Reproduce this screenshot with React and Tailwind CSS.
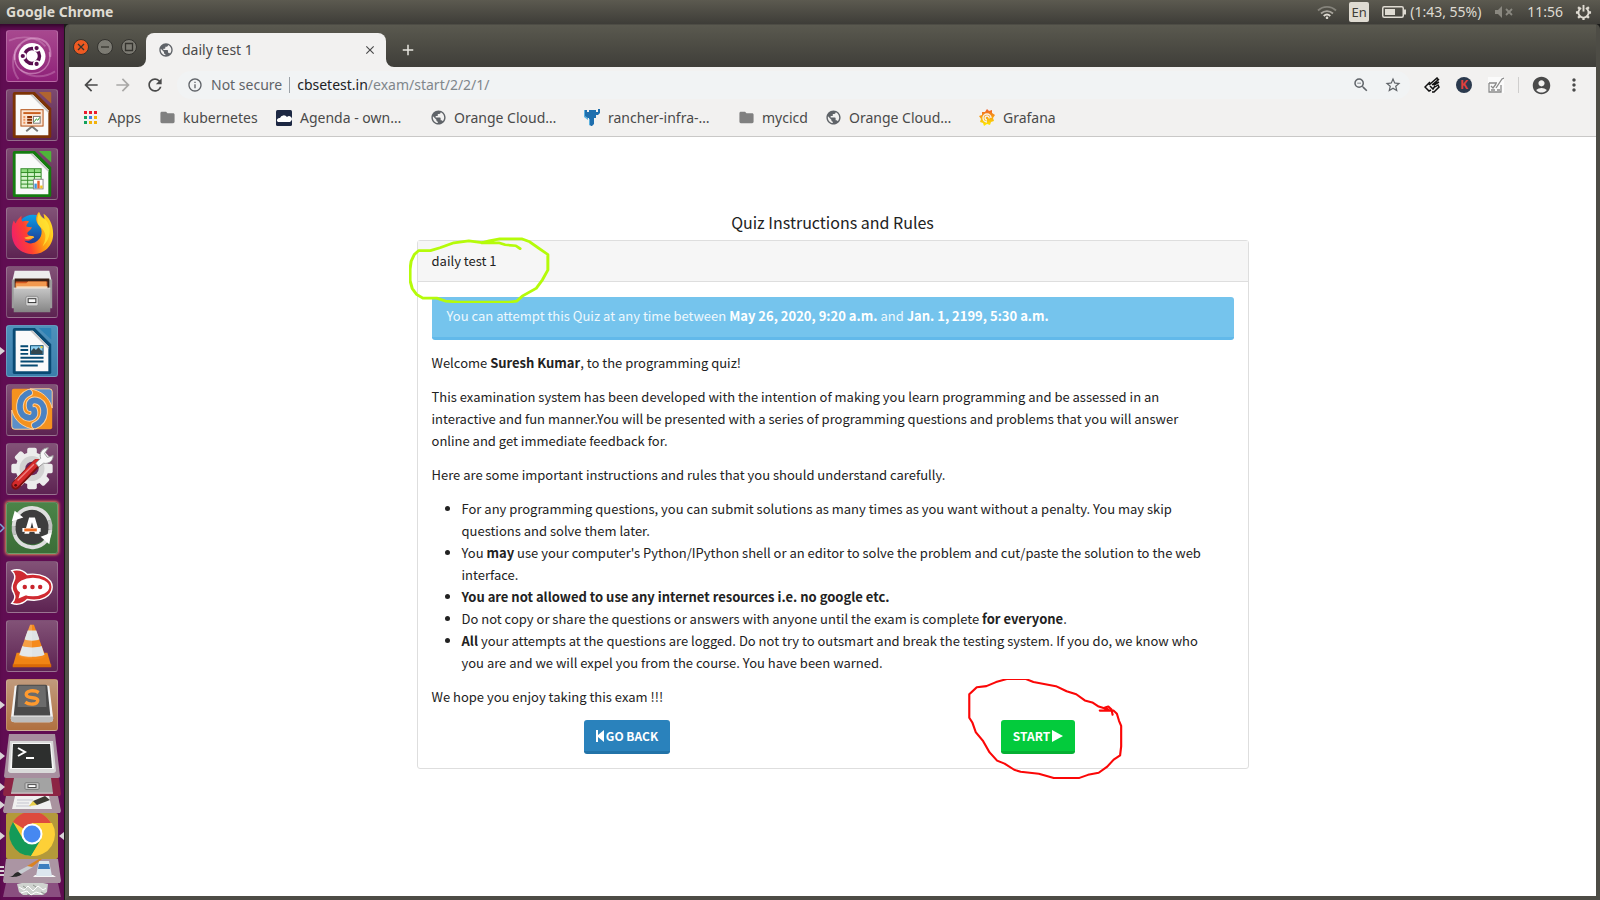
import React from "react";
import {
  MdPublic, MdFolder, MdArrowBack, MdArrowForward, MdRefresh, MdInfoOutline,
  MdStarBorder, MdMoreVert, MdAccountCircle, MdOutlineZoomOut, MdClose, MdAdd,
} from "react-icons/md";

/* ---------- Launcher drawings (52 x 52 grid) ---------- */

function UbuntuIcon() {
  return (
    <svg viewBox="0 0 52 52" className="size-full">
      <g fill="none" stroke="#e9b6dc" strokeOpacity=".5">
        <path d="M8 30C6 14 22 4 36 9c7 3 10 9 9 18" strokeWidth="2" />
        <path d="M44 22c3 14-8 24-22 22C12 42 7 34 8 24" strokeWidth="1.5" />
        <path d="M2 10C16 4 32 6 40 16M50 42C38 50 22 48 14 40M12 50C4 40 4 24 14 14" strokeWidth="2" strokeOpacity=".3" />
      </g>
      <circle cx="26" cy="26.500" r="14" fill="#fff" />
      <circle cx="26" cy="26" r="7.800" fill="none" stroke="#5a0f50" strokeWidth="3.600" />
      <g stroke="#fff" strokeWidth="1.600" fill="#5a0f50">
        <circle cx="16.400" cy="26" r="3" />
        <circle cx="30.800" cy="17.700" r="3" />
        <circle cx="30.800" cy="34.300" r="3" />
      </g>
    </svg>
  );
}

function OfficeSheet({ edge, light, page = "#fafafa", children }) {
  return (
    <svg viewBox="0 0 52 52" className="size-full">
      <path d="M8 2h21l17 17v29a2 2 0 0 1-2 2H8a2 2 0 0 1-2-2V4a2 2 0 0 1 2-2z" fill={edge} />
      <path d="M33 2h12a1 1 0 0 1 1 1v11z" fill={light} />
      <path d="M9 5h18l16 16v26H9z" fill={page} />
      <path d="M27 5l16 16v3L24 5z" fill="#c9c9c9" />
      {children}
    </svg>
  );
}

function ImpressIcon() {
  return (
    <OfficeSheet edge="#7d3306" light="#b06430">
      <path d="M26 39v-3M26 38l-6 5M26 38l6 5" stroke="#777" strokeWidth="2" />
      <rect x="14.500" y="20.500" width="23" height="17" fill="#fbe3d2" stroke="#b04a0e" />
      <rect x="17" y="23" width="18" height="2" fill="#c9601f" />
      <path d="M17 28h2M17 31h2M17 34h2" stroke="#f0935a" strokeWidth="2" />
      <path d="M21 28h5M21 31h5M21 34h5" stroke="#8a3004" strokeWidth="2" />
      <rect x="27.500" y="27.500" width="7" height="7" fill="#fff" stroke="#777" />
      <path d="M28.500 33l2-3 1.500 1.500 2-3" fill="none" stroke="#2b9c2b" />
    </OfficeSheet>
  );
}

function CalcIcon() {
  return (
    <OfficeSheet edge="#157c10" light="#4fb53a">
      <rect x="14" y="20" width="22" height="21" fill="#2f8a24" />
      {[21, 25, 29, 33, 37].map((y) => (
        <g key={y} fill={y === 21 ? "#8fdc7f" : "#d2f4c8"}>
          <rect x="15" y={y} width="6" height="3" />
          <rect x="22" y={y} width="6" height="3" />
          <rect x="29" y={y} width="6" height="3" />
        </g>
      ))}
      <rect x="27.500" y="31.500" width="10" height="10" fill="#fff" stroke="#888" />
      <rect x="28.500" y="36" width="2.500" height="5" fill="#3f96dc" />
      <rect x="31.500" y="33" width="2.500" height="8" fill="#e8622a" />
      <rect x="34.500" y="38" width="2.500" height="3" fill="#f2c320" />
    </OfficeSheet>
  );
}

function WriterIcon() {
  return (
    <OfficeSheet edge="#094a73" light="#2d81b4">
      <path d="M14 21h8M14 25h8M14 29h8M14 33h24M14 37h24M14 41h18" stroke="#064a72" strokeWidth="2" />
      <rect x="24.500" y="20.500" width="13" height="9" fill="#8fd0f0" stroke="#064a72" />
      <path d="M25 29v-3l3-3 2 2 3-3 2 3 2 1v3z" fill="#33464d" />
      <rect x="35" y="21" width="2" height="2" fill="#f1cf2b" />
    </OfficeSheet>
  );
}

function FirefoxIcon() {
  return (
    <svg viewBox="0 0 52 52" className="size-full">
      <defs>
        <linearGradient id="fxBody" x1="0" y1=".6" x2="1" y2=".3">
          <stop offset="0" stopColor="#f0206a" />
          <stop offset=".35" stopColor="#ff4030" />
          <stop offset=".65" stopColor="#ff9a12" />
          <stop offset="1" stopColor="#ffe226" />
        </linearGradient>
        <linearGradient id="fxGlobe" x1="0" y1="0" x2="0" y2="1">
          <stop offset="0" stopColor="#0aa0e8" />
          <stop offset="1" stopColor="#232a86" />
        </linearGradient>
      </defs>
      <circle cx="27" cy="24" r="17" fill="url(#fxGlobe)" />
      <path d="M7 13c1 1 1 2 2 3 2-4 3-5 6-8 0 3 0 5 1 6 3-1 5-1 7 0-2 2-3 4-3 5 1 1 4 1 6 1-1 3-4 4-5 6 0 2 2 3 5 3 1 0 1 2 0 3-3 3-6 2-8 2 2 2 6 4 11 2 8-4 9-14 4-18-3-4-4-8 0-14 0 4 3 6 6 8 0-2-1-5-1-6 5 3 10 10 10 21 0 12-9 21-21 21-13 0-22-9-22-22 0-5 0-9 2-13z" fill="url(#fxBody)" />
      <path d="M34 4c0 4 3 6 6 8 6 6 7 19-3 28 8-16-2-18-5-24-1-4 0-8 2-12z" fill="#ffe836" fillOpacity=".75" />
      <path d="M18 31c3 3 7 1 10 0 1-2-2-2-4-2" fill="#ffb52e" />
    </svg>
  );
}

function FilesIcon() {
  return (
    <svg viewBox="0 0 52 52" className="size-full">
      <defs>
        <linearGradient id="cab" x1="0" y1="0" x2="0" y2="1">
          <stop offset="0" stopColor="#c6c6c6" />
          <stop offset="1" stopColor="#858585" />
        </linearGradient>
      </defs>
      <path d="M8 4h36l3 13H5z" fill="#ededed" />
      <path d="M5 13h42v30H5z" fill="#9c9c9c" />
      <path d="M8 12h36v11H8z" fill="#3a2116" />
      <path d="M9 15h33v7H9z" fill="#d3571f" />
      <path d="M9 17h11l2-2h19v8H9z" fill="#f2994f" />
      <path d="M10 20h32v2H10z" fill="#f7d9b4" />
      <path d="M7 22h38v25H7z" fill="url(#cab)" />
      <path d="M7 22h38" stroke="#e8e8e8" />
      <rect x="19.500" y="30.500" width="13" height="10" rx="2" fill="#d6d6d6" stroke="#8a8a8a" />
      <rect x="22" y="33" width="8" height="4" fill="#fafafa" stroke="#333" />
    </svg>
  );
}

function SwirlIcon() {
  const arm = "M23 8C11 13 11 29 19 33c7 3 11-1 9-7";
  return (
    <svg viewBox="0 0 52 52" className="size-full">
      <rect x="5" y="4" width="42" height="42" rx="2" fill="#f4921f" />
      <path d="M24 4h20a3 3 0 0 1 3 3v17C44 12 35 6 24 4z" fill="#5b8fca" stroke="#ffd09a" />
      <path d="M28 46H8a3 3 0 0 1-3-3V26c3 12 12 18 23 20z" fill="#5b8fca" stroke="#ffd09a" />
      <g fill="none" strokeLinecap="round">
        <path d={arm} stroke="#ffd09a" strokeWidth="8" />
        <path d={arm} stroke="#ffd09a" strokeWidth="8" transform="rotate(180 26 25)" />
        <path d={arm} stroke="#4a82c2" strokeWidth="6" />
        <path d={arm} stroke="#4a82c2" strokeWidth="6" transform="rotate(180 26 25)" />
      </g>
    </svg>
  );
}

function SettingsIcon() {
  return (
    <svg viewBox="0 0 52 52" className="size-full">
      <g fill="#ececec">
        {[0, 45, 90, 135].map((a) => (
          <rect key={a} x="21" y="4" width="10" height="43" rx="2" transform={"rotate(" + a + " 26 25.500)"} />
        ))}
        <circle cx="26" cy="25.500" r="17" />
      </g>
      <circle cx="26" cy="25.500" r="13" fill="#d2d2d2" />
      <circle cx="26" cy="25.500" r="7" fill="#6a2a5e" />
      <path d="M9 43L31 20" stroke="#7e1010" strokeWidth="9" strokeLinecap="round" />
      <path d="M9 42L31 19" stroke="#d42b2b" strokeWidth="6.500" strokeLinecap="round" />
      <path d="M11 38l17-17" stroke="#f08080" strokeWidth="1.500" />
      <path d="M30 20l5-5c-2-6 2-11 8-11l-4 6 3 4 6-2c0 6-5 9-10 8l-5 4z" fill="#f7f7f7" stroke="#9a9a9a" />
      <circle cx="9" cy="43" r="1.500" fill="#5d0c0c" />
    </svg>
  );
}

function UpdaterIcon() {
  return (
    <svg viewBox="0 0 52 52" className="size-full">
      <circle cx="26" cy="25" r="18" fill="#3d3d3d" />
      <path d="M45 28A19 19 0 0 1 8 33" fill="none" stroke="#dedede" strokeWidth="4" />
      <path d="M7 24A19 19 0 0 1 44 18" fill="none" stroke="#dedede" strokeWidth="4" />
      <path d="M8 33A19 19 0 0 1 7 24M44 18a19 19 0 0 1 1 10" fill="none" stroke="#c0c0c0" strokeWidth="4" />
      <path d="M8 8l-3 11 12-4zM46 31l-11 4 9 8z" fill="#fff" />
      <path d="M23 15h6l5 17h-5l-3-12-3 12h-5z" fill="#fff" />
      <rect x="16" y="26" width="19" height="4" fill="#fff" />
      <rect x="18" y="26.500" width="13" height="3" fill="#ef6b21" />
    </svg>
  );
}

function RocketIcon() {
  return (
    <svg viewBox="0 0 52 52" className="size-full">
      <path d="M5 9c6-2 12 0 16 4 15-2 26 4 26 13s-11 16-26 13c-4 4-10 6-16 4 4-4 4-7 2-11-2-3-2-8 0-12 2-4 2-7-2-11z" fill="#cf2a31" stroke="#fff" strokeWidth="1.500" />
      <ellipse cx="27" cy="26" rx="17" ry="9.500" fill="#fff" />
      <path d="M14 30l-2 8 9-4z" fill="#fff" />
      <g fill="#c9242c">
        <circle cx="18.500" cy="26" r="2.300" />
        <circle cx="26.500" cy="26" r="2.300" />
        <circle cx="34.500" cy="26" r="2.300" />
      </g>
    </svg>
  );
}

function VlcIcon() {
  return (
    <svg viewBox="0 0 52 52" className="size-full">
      <path d="M10 33h32l4 14H6z" fill="#f08514" />
      <path d="M6 45h40v3H6z" fill="#d96a06" />
      <path d="M24 4h4l12 33c-3 4-25 4-28 0z" fill="#f58a1c" />
      <path d="M21.500 10h9l3.200 9c-3 2-12 2-15.400 0z" fill="#dfe3e6" />
      <path d="M16 26c5 2 15 2 20 0l3 9c-5 3-21 3-26 0z" fill="#dfe3e6" />
      <path d="M24 4h2v34c-4 0-10 0-14-2z" fill="#fff" fillOpacity=".18" />
    </svg>
  );
}

function SublimeIcon() {
  return (
    <svg viewBox="0 0 52 52" className="size-full">
      <path d="M8 6h36l4 34a4 4 0 0 1-4 4H8a4 4 0 0 1-4-4z" fill="#f3f3f3" />
      <path d="M4 38h44v2a4 4 0 0 1-4 4H8a4 4 0 0 1-4-4z" fill="#bdbdbd" />
      <path d="M12 5h28a2 2 0 0 1 2 2l3 30H7l3-30a2 2 0 0 1 2-2z" fill="#4a4a4a" />
      <path d="M12 6h28l1 22H11z" fill="#6b6b6b" />
      <path d="M33 13c-5-3-13-2-13 2 0 5 12 2 12 6 0 5-9 5-13 2" fill="none" stroke="#ff9a2e" strokeWidth="3.500" />
    </svg>
  );
}

/* ---------- Folded launcher entries (58 wide) ---------- */

function TerminalIcon() {
  return (
    <svg viewBox="0 0 58 44" className="size-full" preserveAspectRatio="none">
      <path d="M6 0h46l5 42a2 2 0 0 1-2 2H3a2 2 0 0 1-2-2z" fill="#a78f9f" />
      <path d="M7 7h43l3 30a3 3 0 0 1-3 2H8a3 3 0 0 1-3-2z" fill="#d9d9d9" />
      <path d="M9 9h39l3 26H7z" fill="#f7f7f7" />
      <path d="M10 10h37l2 24H9z" fill="#2d2f2e" />
      <path d="M15 14l7 4-7 4M23 24h8" fill="none" stroke="#fff" strokeWidth="2" />
    </svg>
  );
}

function FoldedFilesIcon() {
  return (
    <svg viewBox="0 0 58 19" className="size-full" preserveAspectRatio="none">
      <path d="M2 0h54l2 17-1 2H1l-1-2z" fill="#8c2444" />
      <path d="M11 0h37l2 16H8z" fill="#a3a3a3" />
      <path d="M8 16h42" stroke="#ddd" />
      <rect x="22" y="5" width="14" height="7" rx="1" fill="#c9c9c9" stroke="#777" />
      <rect x="25" y="7" width="8" height="3" fill="#fff" stroke="#444" />
    </svg>
  );
}

function FoldedEditorIcon() {
  return (
    <svg viewBox="0 0 58 17" className="size-full" preserveAspectRatio="none">
      <path d="M3 0h52l3 15-1 2H1l-1-2z" fill="#a9939f" />
      <path d="M12 0h34l3 13H9z" fill="#f0f0f0" />
      <path d="M14 4h16M14 7h12M13 10h15" stroke="#c5c5d0" />
      <path d="M30 5L42 0l5 4-13 5-5 0z" fill="#3b3b33" />
      <path d="M26 10l4-5 4 4z" fill="#e8cf4a" />
    </svg>
  );
}

function ChromeIcon() {
  return (
    <svg viewBox="0 0 58 46" className="size-full">
      <rect x="3" y="0" width="52" height="46" rx="2" fill="#b3993a" />
      <circle cx="29" cy="21" r="22" fill="#fbc934" />
      <path d="M29 21L10 9a22 22 0 0 1 38 1H29z" fill="#dd4b3e" />
      <path d="M10 9a22 22 0 0 0 18 34l10-17H20z" fill="#149a58" />
      <path d="M29 10h20a22 22 0 0 1-21 33l11-17z" fill="#fdd037" />
      <circle cx="29" cy="21" r="10.500" fill="#fff" />
      <circle cx="29" cy="21" r="8.500" fill="#4688f1" />
    </svg>
  );
}

function PaintIcon() {
  return (
    <svg viewBox="0 0 58 24" className="size-full" preserveAspectRatio="none">
      <path d="M3 0h52l3 22-1 2H1l-1-2z" fill="#ab95a3" />
      <path d="M32 16h18l3 2H30z" fill="#f5f5f5" />
      <path d="M36 2h10l3 15H33z" fill="#dce6ee" />
      <path d="M36 5h10l1 5H35z" fill="#3d7fc0" />
      <path d="M6 18c5 0 4-4 9-5l4 2c-3 3-8 3-13 3z" fill="#2a2a2a" />
      <path d="M15 12l12-6 3 2-12 7z" fill="#c8cdd2" />
      <path d="M24 7l12-7h3l-10 8z" fill="#d98222" />
    </svg>
  );
}

function TrashIcon() {
  return (
    <svg viewBox="0 0 58 15" className="size-full" preserveAspectRatio="none">
      <path d="M3 0h52l3 14H0z" fill="#8a4f80" />
      <path d="M14 1l5-1h21l5 1-1 8-4 3H20l-4-3z" fill="#cfd3cf" />
      <path d="M16 4l5 3 4-4 5 5 5-5 5 4 3-2M18 10l6-2 4 4 5-3 6 2" fill="none" stroke="#fff" />
      <path d="M20 3l3 2M30 2l3 2M38 9l4 2M24 11l3 1" stroke="#8f958f" />
    </svg>
  );
}

const tiles = [
  { label: "Search your computer", Icon: UbuntuIcon, bg: "bg-linear-to-b from-[#a8488f] to-[#8e1f78]" },
  { label: "LibreOffice Impress", Icon: ImpressIcon, bg: "bg-linear-to-b from-[#7c4a70] to-[#5d2352]" },
  { label: "LibreOffice Calc", Icon: CalcIcon, bg: "bg-linear-to-b from-[#7c4a70] to-[#5d2352]" },
  { label: "Firefox", Icon: FirefoxIcon, bg: "bg-linear-to-b from-[#825277] to-[#5d2352]" },
  { label: "Files", Icon: FilesIcon, bg: "bg-linear-to-b from-[#825277] to-[#5d2352]" },
  { label: "LibreOffice Writer", Icon: WriterIcon, bg: "bg-linear-to-b from-[#4e91bb] to-[#3b7eab]", mark: "solid" },
  { label: "Meld", Icon: SwirlIcon, bg: "bg-linear-to-b from-[#825277] to-[#5d2352]" },
  { label: "System Settings", Icon: SettingsIcon, bg: "bg-linear-to-b from-[#825277] to-[#5d2352]" },
  { label: "Software Updater", Icon: UpdaterIcon, bg: "bg-linear-to-b from-[#4b8448] to-[#3b6d37] shadow-[0_0_3px_1px_#e08a5a]", mark: "hollow" },
  { label: "Rocket.Chat", Icon: RocketIcon, bg: "bg-linear-to-b from-[#825277] to-[#5d2352]" },
  { label: "VLC media player", Icon: VlcIcon, bg: "bg-linear-to-b from-[#825277] to-[#5d2352]" },
  { label: "Sublime Text", Icon: SublimeIcon, bg: "bg-linear-to-b from-[#c09a7c] to-[#b0703f]", mark: "solid" },
];

const folded = [
  { label: "Terminal", Icon: TerminalIcon, size: "h-11", mark: "solid" },
  { label: "Files window", Icon: FoldedFilesIcon, size: "h-[18px]", mark: "solid" },
  { label: "Text Editor", Icon: FoldedEditorIcon, size: "h-[17px]", mark: "solid" },
  { label: "Google Chrome", Icon: ChromeIcon, size: "h-[46px]", mark: "solid", active: true },
  { label: "Paint", Icon: PaintIcon, size: "h-6", mark: "bars" },
  { label: "Trash", Icon: TrashIcon, size: "h-[15px]" },
];

function Mark({ kind }) {
  if (!kind) return null;
  return (
    <svg viewBox="0 0 5 10" className="absolute top-1/2 left-0 h-[10px] w-[5px] -translate-y-1/2">
      {kind === "solid" && <path d="M0 1l5 4-5 4z" fill="#d9d3d7" />}
      {kind === "hollow" && <path d="M0 1l4 4-4 4" fill="none" stroke="#7ea6d8" strokeWidth="1.500" />}
      {kind === "bars" && <path d="M0 1h4M0 5h4M0 9h4" stroke="#d9d3d7" strokeWidth="2" />}
    </svg>
  );
}

function Launcher() {
  return (
    <nav aria-label="Launcher" className="flex w-16 shrink-0 flex-col overflow-hidden bg-[#600d52] pt-[6px] shadow-[inset_0_5px_5px_-3px_#2a0524]">
      <div className="flex flex-col gap-[7px] pb-[3px]">
        {tiles.map(({ label, Icon, bg, mark }) => (
          <button key={label} aria-label={label} className="relative block w-full px-[6px]">
            <span className={"block size-[52px] rounded-[3px] border border-white/20 " + bg}>
              <Icon />
            </span>
            <Mark kind={mark} />
          </button>
        ))}
      </div>
      {folded.map(({ label, Icon, size, mark, active }) => (
        <button key={label} aria-label={label} className={"relative block w-full shrink-0 px-[3px] " + size}>
          <Icon />
          <Mark kind={mark} />
          {active && (
            <svg viewBox="0 0 5 10" className="absolute top-1/2 right-0 h-[10px] w-[5px] -translate-y-1/2">
              <path d="M5 1L0 5l5 4z" fill="#d9d3d7" />
            </svg>
          )}
        </button>
      ))}
    </nav>
  );
}

/* ---------- Desktop top bar ---------- */

function MenuBar() {
  return (
    <header className="flex h-6 shrink-0 items-center justify-between bg-linear-to-b from-[#5c5a50] to-[#3e3d38] pr-2 pl-[6px] text-[#dfdbd2]">
      <span className="text-[14px] leading-6 font-bold">Google Chrome</span>
      <div className="flex items-center text-[15px] leading-6">
        <svg viewBox="0 0 20 14" className="mr-3 h-[14px] w-5">
          <g fill="none" strokeWidth="1.800">
            <path d="M1 5.500a13 13 0 0 1 18 0" stroke="#85837b" />
            <path d="M4 8.500a9 9 0 0 1 12 0" stroke="#a9a69e" />
            <path d="M6.700 11a5 5 0 0 1 6.600 0" stroke="#dfdbd2" />
          </g>
          <circle cx="10" cy="12.800" r="1.300" fill="#dfdbd2" />
        </svg>
        <span className="mr-[13px] flex size-5 items-center justify-center rounded-[2px] bg-[#dfdbd2] text-[13px] leading-5 text-[#3e3d38]">En</span>
        <svg viewBox="0 0 24 12" className="mr-1 h-3 w-6">
          <rect x=".75" y=".75" width="20.500" height="10.500" rx="1.500" fill="none" stroke="#dfdbd2" strokeWidth="1.500" />
          <rect x="3" y="3" width="10" height="6" fill="#dfdbd2" />
          <rect x="22" y="3.500" width="2" height="5" fill="#dfdbd2" />
        </svg>
        <span className="w-[85px] text-[14px]">(1:43, 55%)</span>
        <svg viewBox="0 0 18 12" className="mr-[14px] h-3 w-[18px]">
          <path d="M0 4h3l4-4v12L3 8H0z" fill="#8a8880" />
          <path d="M11 3l6 6M17 3l-6 6" stroke="#8a8880" strokeWidth="1.800" />
        </svg>
        <span className="mr-3 text-[14px]">11:56</span>
        <svg viewBox="0 0 18 18" className="size-[17px]">
          <g stroke="#dfdbd2" strokeWidth="2.400">
            <path d="M1 9h3M14 9h3M9 14v3M3.300 3.300l2 2M14.700 3.300l-2 2M3.300 14.700l2-2M14.700 14.700l-2-2" />
            <path d="M9 1v7" strokeWidth="2" />
          </g>
          <path d="M6.500 4.200a5.400 5.400 0 1 0 5 0" fill="none" stroke="#dfdbd2" strokeWidth="2" />
        </svg>
      </div>
    </header>
  );
}

/* ---------- Browser window ---------- */

function WindowButton({ label, color, children }) {
  return (
    <button aria-label={label} className={"flex size-4 items-center justify-center rounded-full border border-[#33322e] " + color}>
      <svg viewBox="0 0 16 16" className="size-4 shrink-0" fill="none" stroke="#34332e" strokeWidth="1.300">
        {children}
      </svg>
    </button>
  );
}

function TabStrip() {
  return (
    <div className="flex h-[42px] items-end bg-linear-to-b from-[#5a594f] to-[#3f3e39] pl-1">
      <div className="flex gap-2 self-center pt-[2px]">
        <WindowButton label="Close window" color="bg-[#ee5a22]"><path d="M5 5l6 6M11 5l-6 6" /></WindowButton>
        <WindowButton label="Minimize" color="bg-[#7c7b73]"><path d="M4 8h8" /></WindowButton>
        <WindowButton label="Maximize" color="bg-[#7c7b73]"><path d="M4.500 4.500h7v7h-7z" /></WindowButton>
      </div>
      <svg viewBox="0 0 8 8" className="ml-px size-2"><path d="M8 0v8H0a8 8 0 0 0 8-8z" fill="#f2f1f0" /></svg>
      <div className="flex h-[34px] w-[240px] items-center rounded-t-lg bg-[#f2f1f0] pr-[9px] pl-3 text-[#4a4a4a]">
        <MdPublic className="size-4 text-[#5f6368]" />
        <span className="ml-2 flex-1 text-[14px] leading-5">daily test 1</span>
        <button aria-label="Close tab"><MdClose className="size-[14px]" /></button>
      </div>
      <svg viewBox="0 0 8 8" className="size-2"><path d="M0 0v8h8a8 8 0 0 1-8-8z" fill="#f2f1f0" /></svg>
      <button aria-label="New tab" className="mb-2 ml-[5px] text-[#e8e6e0]"><MdAdd className="size-[18px]" /></button>
    </div>
  );
}

function Toolbar() {
  return (
    <div className="flex h-9 items-center pr-3 pl-3 text-[#4a4a4a]">
      <div className="flex gap-3">
        <button aria-label="Back"><MdArrowBack className="size-5" /></button>
        <button aria-label="Forward"><MdArrowForward className="size-5 text-[#a9a8a6]" /></button>
        <button aria-label="Reload"><MdRefresh className="size-5" /></button>
      </div>
      <div className="ml-3 flex h-7 flex-1 items-center rounded-full bg-[#f1f3f4] pr-2 pl-[10px] text-[14px] leading-5">
        <MdInfoOutline className="size-4 text-[#5f6368]" />
        <span className="ml-2 text-[#5f6368]">Not secure</span>
        <span className="mr-[7px] ml-[7px] h-4 w-px bg-[#9aa0a6]" />
        <span className="flex-1 text-[#80868b]"><span className="text-[#202124]">cbsetest.in</span>/exam/start/2/2/1/</span>
        <button aria-label="Zoom"><MdOutlineZoomOut className="size-[18px] text-[#5f6368]" /></button>
        <button aria-label="Bookmark this page" className="ml-[14px]"><MdStarBorder className="size-[18px] text-[#5f6368]" /></button>
      </div>
      <div className="ml-[14px] flex items-center gap-4">
        <button aria-label="Scribble extension">
          <svg viewBox="0 0 16 16" className="size-4" fill="none" stroke="#111" strokeWidth="1.500">
            <path d="M6 5L1 10l4 4 2-1M5 8l8-7 1 2-6 5M9 8l6-6M10 8l5-3M6 9l3 3 2-3M11 10l3-2 1 2-5 5H8" />
          </svg>
        </button>
        <button aria-label="K extension" className="size-4 rounded-full bg-[#2b3a4e] text-[12px] leading-4 font-bold text-[#e0403c]">K</button>
        <button aria-label="Form extension">
          <svg viewBox="0 0 16 16" className="size-4" fill="none" stroke="#8a8a8a" strokeWidth="1.300">
            <rect x="0" y="0" width="16" height="16" fill="#fbfbfb" stroke="none" />
            <path d="M1 6h8M13 8v7H1V6M3 9l2 2 3-4M8 11l6-9 2-1M9 13h3M3 13h4" />
          </svg>
        </button>
      </div>
      <span className="ml-[14px] h-4 w-px bg-[#cfcecd]" />
      <button aria-label="Profile" className="ml-3"><MdAccountCircle className="size-[21px]" /></button>
      <button aria-label="Menu" className="ml-3"><MdMoreVert className="size-5" /></button>
    </div>
  );
}

function AppsIcon() {
  const colors = ["#ea1c2c", "#ea1c2c", "#ea1c2c", "#12a05c", "#3f7ee8", "#f2b20c", "#12a05c", "#f2b20c", "#f2b20c"];
  return (
    <svg viewBox="0 0 13 13" className="size-[13px]">
      {colors.map((c, i) => (
        <rect key={i} x={(i % 3) * 5} y={Math.floor(i / 3) * 5} width="3" height="3" fill={c} />
      ))}
    </svg>
  );
}

function CloudIcon() {
  return (
    <svg viewBox="0 0 16 16" className="size-4">
      <rect width="16" height="16" rx="1.500" fill="#1d2843" />
      <path d="M1 11a2.500 2.500 0 0 1 3-3 4 4 0 0 1 7-1 2.500 2.500 0 0 1 4 4l-1 1H2z" fill="#fff" />
    </svg>
  );
}

function RancherIcon() {
  return (
    <svg viewBox="0 0 16 18" className="h-[18px] w-4">
      <path d="M0 1h3v2h2V1h7v2h2V0h2v4l-2 2h-2v3h-2v6l-2 2H7l-2-2V9H3L0 7z" fill="#1f6fae" />
      <path d="M0 1h1v6l3 2v2L0 8zM5 10h1v6l1 1-2-1z" fill="#5bb0de" />
    </svg>
  );
}

function GrafanaIcon() {
  return (
    <svg viewBox="0 0 16 18" className="h-[18px] w-4">
      <defs>
        <linearGradient id="graf" x1="0" y1="1" x2="0" y2="0">
          <stop offset="0" stopColor="#fff100" />
          <stop offset="1" stopColor="#f05a28" />
        </linearGradient>
      </defs>
      <path d="M8 0l2 2 3-1 0 3 3 2-2 3 1 3-3 1-1 3-3-1-3 2-1-3-3-1 1-3-2-3 3-1 0-3 3 0z" fill="url(#graf)" />
      <path d="M12 9a4 4 0 1 0-4 4M10 9.500A2 2 0 1 0 8 11" fill="none" stroke="#f7f3ea" strokeWidth="1.400" />
    </svg>
  );
}

const folderIcon = <MdFolder className="size-[17px] text-[#808080]" />;
const globeIcon = <MdPublic className="size-[17px] text-[#5f6368]" />;

const bookmarks = [
  { label: "Apps", icon: <AppsIcon />, box: "w-[75px]" },
  { label: "kubernetes", icon: folderIcon, box: "w-[117px]" },
  { label: "Agenda - own…", icon: <CloudIcon />, box: "w-[154px]" },
  { label: "Orange Cloud…", icon: globeIcon, box: "w-[154px]" },
  { label: "rancher-infra-…", icon: <RancherIcon />, box: "w-[154px]" },
  { label: "mycicd", icon: folderIcon, box: "w-[87px]" },
  { label: "Orange Cloud…", icon: globeIcon, box: "w-[154px]" },
  { label: "Grafana", icon: <GrafanaIcon />, box: "w-[90px]" },
];

function BookmarksBar() {
  return (
    <nav aria-label="Bookmarks" className="flex h-[34px] items-center border-b border-[#c9c8c7] pb-1 pl-[15px] text-[14px] leading-5 text-[#4a4a4a]">
      {bookmarks.map(({ label, icon, box }, i) => (
        <a key={i} href="#" className={"flex shrink-0 items-center whitespace-nowrap " + box}>
          <span className="flex w-6 shrink-0 items-center">{icon}</span>
          {label}
        </a>
      ))}
    </nav>
  );
}

/* ---------- Quiz page ---------- */

function QuizPage() {
  return (
    <main className="flex-1 bg-white px-4 pt-[73px] pb-8 font-['Noto_Sans_CJK_SC',sans-serif] text-[13px] leading-[22px] text-[#222]">
      <h1 className="pb-[6px] text-center text-[16px] leading-6">Quiz Instructions and Rules</h1>
      <section className="relative mx-auto max-w-[832px] rounded-[3px] border border-[#dedede]">
        <h2 className="border-b border-[#dedede] bg-[#f6f6f6] px-[14px] py-[9px]">daily test 1</h2>
        <div className="flex flex-col gap-3 px-[14px] pt-[15px] pb-[14px]">
          <div role="alert" className="rounded-[3px] border-b-3 border-[#62b9ea] bg-[#75c4ed] px-[15px] pt-[8px] pb-[10px] text-[#eef8fd]">
            You can attempt this Quiz at any time between <b className="text-white">May 26, 2020, 9:20 a.m.</b> and <b className="text-white">Jan. 1, 2199, 5:30 a.m.</b>
          </div>
          <div className="flex flex-col gap-3 pr-6">
            <p>Welcome <b>Suresh Kumar</b>, to the programming quiz!</p>
            <p>
              This examination system has been developed with the intention of making you learn programming and be assessed in an
              interactive and fun manner.You will be presented with a series of programming questions and problems that you will answer
              online and get immediate feedback for.
            </p>
            <p>Here are some important instructions and rules that you should understand carefully.</p>
            <ul className="list-disc pl-[30px]">
              <li>For any programming questions, you can submit solutions as many times as you want without a penalty. You may skip questions and solve them later.</li>
              <li>You <b>may</b> use your computer's Python/IPython shell or an editor to solve the problem and cut/paste the solution to the web interface.</li>
              <li><b>You are not allowed to use any internet resources i.e. no google etc.</b></li>
              <li>Do not copy or share the questions or answers with anyone until the exam is complete <b>for everyone</b>.</li>
              <li><b>All</b> your attempts at the questions are logged. Do not try to outsmart and break the testing system. If you do, we know who you are and we will expel you from the course. You have been warned.</li>
            </ul>
            <p>We hope you enjoy taking this exam !!!</p>
          </div>
          <div className="-mx-[10px] grid grid-cols-2 justify-items-center text-[12px] leading-[18px] font-bold text-white">
            <button className="flex h-[34px] items-center gap-[2px] rounded-[3px] border-b-3 border-[#2273a8] bg-[#2a82bc] px-3">
              <svg viewBox="0 0 8 12" className="h-3 w-2" fill="#fff"><path d="M0 0h2v5l6-5v12L2 7v5H0z" /></svg>
              GO BACK
            </button>
            <button className="flex h-[34px] items-center gap-[2px] rounded-[3px] border-b-3 border-[#05b033] bg-[#03cb3c] px-3">
              START
              <svg viewBox="0 0 11 12" className="h-3 w-[11px]" fill="#fff"><path d="M0 0l11 6-11 6z" /></svg>
            </button>
          </div>
        </div>
        <svg viewBox="0 0 132 68" preserveAspectRatio="none" className="pointer-events-none absolute -top-1 -left-[9px] h-[66px] w-[141px]" fill="none" stroke="#b5fb0a" strokeWidth="2.800" strokeLinecap="round" strokeLinejoin="round">
          <path d="M104 12l-4-3-10-1-6-2H70l-14-2-14 2-13 5-9 3H9l-4 4-3 7-1 8v12l2 8 4 6 6 4h13l8 3 12 1h48l7-1 5-5 13-8 6-9 5-10V18l-8-6-9-7-7-3H85L75 4l-7 2" />
        </svg>
        <svg viewBox="0 0 158 102" preserveAspectRatio="none" className="pointer-events-none absolute right-[114px] -bottom-[15px] h-[104px] w-[169px]" fill="none" stroke="#fb0707" strokeWidth="2" strokeLinecap="round" strokeLinejoin="round">
          <path d="M138 35l-1-5-3-3-3 1 3 2-9-3-6-4-7-2-8-6-9-3-10-5-21-4-7-3H39l-10 3-9 4-9 1-7 7v23l3 5 3 9 7 9 6 11 7 8 7 3 9 6 6 2 17 2 14 4h24l8-3 10-2 8-6 6-7 6-4 1-9V46l-2-5-2-7-3-3h-13" />
        </svg>
      </section>
    </main>
  );
}

export default function App() {
  return (
    <div className="flex min-h-screen flex-col bg-[#1a1a18] font-['Noto_Sans',sans-serif]">
      <MenuBar />
      <div className="flex flex-1">
        <Launcher />
        <div className="ml-px flex min-w-0 flex-1 flex-col rounded-t-[5px] border-x-4 border-t border-b-4 border-[#4d4c45] border-l-[#54534b] bg-[#4a4942]">
          <TabStrip />
          <div className="bg-[#f2f1f0]">
            <Toolbar />
            <BookmarksBar />
          </div>
          <QuizPage />
        </div>
      </div>
    </div>
  );
}
